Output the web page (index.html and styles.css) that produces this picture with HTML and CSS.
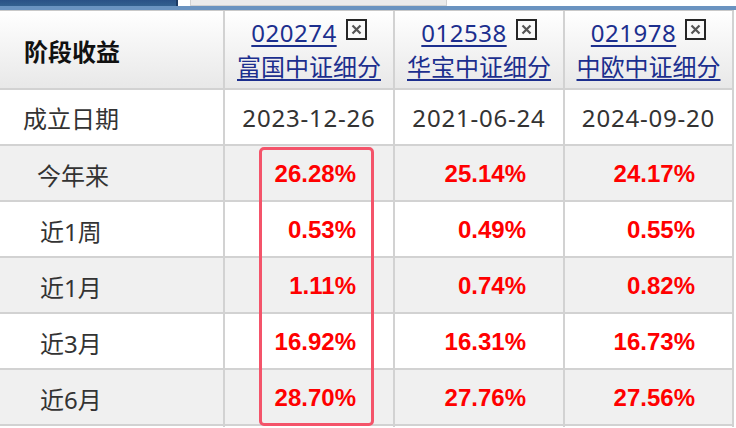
FILE: index.html
```html
<!DOCTYPE html>
<html lang="zh-CN">
<head>
<meta charset="utf-8">
<title>阶段收益</title>
<link rel="stylesheet" href="styles.css">
</head>
<body>
<div class="tabs">
  <div class="tab tab-on"></div>
  <div class="tab tab-off"></div>
</div>
<div class="tabline"></div>
<div class="table">
  <div class="row head">
    <div class="cell c1 title">阶段收益</div>
    <div class="cell fund">
      <div class="code-line"><a class="link code" href="#">020274</a><svg class="close" viewBox="0 0 21 21" width="21" height="21"><rect x="1" y="1" width="19" height="19" fill="#fafafa" stroke="#262626" stroke-width="2"/><path d="M6.5 6.5 L14.5 14.5 M14.5 6.5 L6.5 14.5" stroke="#555" stroke-width="2.2"/></svg></div>
      <a class="link name" href="#">富国中证细分</a>
    </div>
    <div class="cell fund">
      <div class="code-line"><a class="link code" href="#">012538</a><svg class="close" viewBox="0 0 21 21" width="21" height="21"><rect x="1" y="1" width="19" height="19" fill="#fafafa" stroke="#262626" stroke-width="2"/><path d="M6.5 6.5 L14.5 14.5 M14.5 6.5 L6.5 14.5" stroke="#555" stroke-width="2.2"/></svg></div>
      <a class="link name" href="#">华宝中证细分</a>
    </div>
    <div class="cell fund last">
      <div class="code-line"><a class="link code" href="#">021978</a><svg class="close" viewBox="0 0 21 21" width="21" height="21"><rect x="1" y="1" width="19" height="19" fill="#fafafa" stroke="#262626" stroke-width="2"/><path d="M6.5 6.5 L14.5 14.5 M14.5 6.5 L6.5 14.5" stroke="#555" stroke-width="2.2"/></svg></div>
      <a class="link name" href="#">中欧中证细分</a>
    </div>
  </div>
  <div class="row">
    <div class="cell c1 label">成立日期</div>
    <div class="cell date">2023-12-26</div>
    <div class="cell date">2021-06-24</div>
    <div class="cell date last">2024-09-20</div>
  </div>
  <div class="row alt">
    <div class="cell c1 label sub">今年来</div>
    <div class="cell pct">26.28%</div>
    <div class="cell pct">25.14%</div>
    <div class="cell pct last">24.17%</div>
  </div>
  <div class="row">
    <div class="cell c1 label sub near">近1周</div>
    <div class="cell pct">0.53%</div>
    <div class="cell pct">0.49%</div>
    <div class="cell pct last">0.55%</div>
  </div>
  <div class="row alt">
    <div class="cell c1 label sub near">近1月</div>
    <div class="cell pct">1.11%</div>
    <div class="cell pct">0.74%</div>
    <div class="cell pct last">0.82%</div>
  </div>
  <div class="row">
    <div class="cell c1 label sub near">近3月</div>
    <div class="cell pct">16.92%</div>
    <div class="cell pct">16.31%</div>
    <div class="cell pct last">16.73%</div>
  </div>
  <div class="row alt">
    <div class="cell c1 label sub near">近6月</div>
    <div class="cell pct">28.70%</div>
    <div class="cell pct">27.76%</div>
    <div class="cell pct last">27.56%</div>
  </div>
  <div class="row filler">
    <div class="cell c1"></div>
    <div class="cell"></div>
    <div class="cell"></div>
    <div class="cell last"></div>
  </div>
</div>
<div class="highlight"></div>
</body>
</html>
```
FILE: styles.css
```css
html, body {
  margin: 0;
  padding: 0;
  background: #fff;
}
body {
  width: 736px;
  height: 428px;
  overflow: hidden;
  position: relative;
  font-family: "Noto Sans", "Noto Sans CJK SC", sans-serif;
  color: #333;
}
.tabs {
  display: flex;
  height: 6px;
}
.tab-on {
  width: 176px;
  background: linear-gradient(#2a5186, #33608f);
  border-right: 2px solid #1c3a63;
}
.tab-off {
  width: 255px;
  margin-left: 12px;
  background: #ebebeb;
  border: 1px solid #d2d2d2;
  border-top: none;
}
.tabline {
  height: 4px;
  background: #6a93c0;
}
.table {
  width: 732px;
  padding-right: 2px;
  display: flex;
  flex-direction: column;
  gap: 2px;
  background: #d2d2d2;
  border-top: 1px solid #c9c9c9;
}
.row {
  display: flex;
  gap: 2px;
  height: 54px;
}
.row.filler {
  height: 1px;
}
.row .cell {
  background: #fff;
}
.row.alt .cell {
  background: #f0f0f0;
}
.cell {
  width: 168px;
  box-sizing: border-box;
  display: flex;
  align-items: center;
  font-size: 24px;
}
.cell.c1 {
  width: 223px;
}
.cell.last {
  width: 167px;
}
.row.head {
  height: 77px;
}
.row.head .cell {
  background: linear-gradient(#ffffff, #e8e8e8);
}
.title {
  padding-left: 24px;
  font-weight: bold;
  color: #111;
  padding-top: 2px;
}
.fund {
  flex-direction: column;
  justify-content: center;
  align-items: center;
  line-height: 34px;
  padding-top: 1px;
}
.code-line {
  display: flex;
  align-items: center;
  gap: 9px;
}
.code {
  letter-spacing: 0.5px;
}
.close {
  display: block;
  margin-top: -7px;
}
.link {
  color: #1c2f8e;
  text-decoration: underline;
  text-decoration-thickness: 2px;
  text-underline-offset: 3px;
}
.label {
  padding-left: 23px;
  padding-top: 0;
}
.label.sub {
  padding-left: 37px;
  padding-top: 2px;
}
.label.sub.near {
  padding-left: 40px;
}
.date {
  justify-content: center;
  padding-top: 0;
  letter-spacing: 0.8px;
}
.pct {
  justify-content: flex-end;
  padding-right: 37px;
  font-family: "Liberation Sans", Arial, sans-serif;
  font-weight: bold;
  color: #ff0000;
  padding-top: 2px;
}
.highlight {
  position: absolute;
  left: 259px;
  top: 147px;
  width: 115px;
  height: 279px;
  box-sizing: border-box;
  border: 3px solid #f4546a;
  border-radius: 5px;
}
```
